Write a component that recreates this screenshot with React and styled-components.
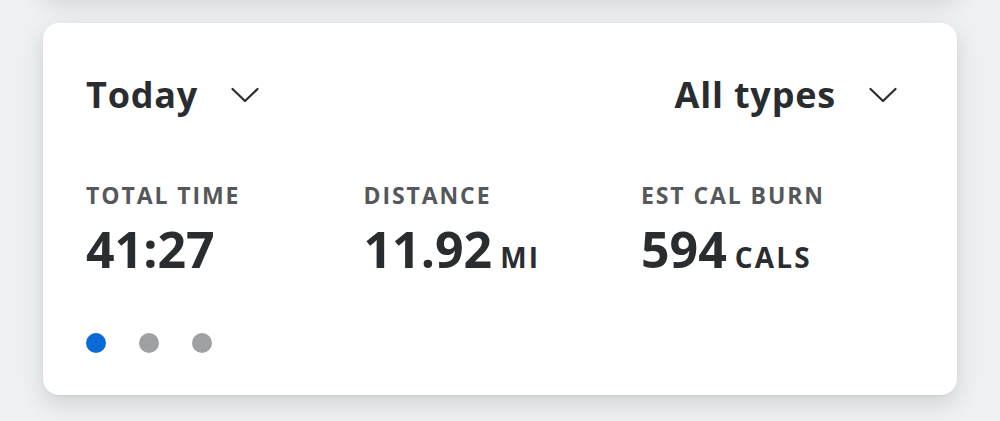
import React from "react";
import styled, { createGlobalStyle } from "styled-components";

const GlobalStyle = createGlobalStyle`
  html, body {
    margin: 0;
    padding: 0;
    background: #eef1f2;
    overflow: hidden;
  }
  body {
    font-family: "Open Sans", Lato, "Liberation Sans", sans-serif;
    color: #2a2d30;
  }
`;

const Feed = styled.div`
  display: flex;
  flex-direction: column;
  gap: 28px;
  margin-top: -105px;
  padding: 0 43px;
  height: 526px;
`;

const Card = styled.section`
  background: #ffffff;
  border-radius: 16px;
  box-shadow: 0 8px 22px rgba(40, 48, 54, 0.16), 0 1px 3px rgba(40, 48, 54, 0.06);
  padding: ${(p) => (p.$ghost ? "0" : "54px 60px 42px 43px")};
  height: ${(p) => (p.$ghost ? "100px" : "auto")};
  flex-shrink: 0;
`;

const Header = styled.div`
  display: flex;
  justify-content: space-between;
  align-items: center;
  height: 36px;
`;

const Picker = styled.button`
  display: flex;
  align-items: center;
  gap: 33px;
  border: 0;
  background: none;
  padding: 0;
  font-family: inherit;
  font-size: 36px;
  line-height: 36px;
  font-weight: 700;
  letter-spacing: 0.8px;
  color: #2a2d30;
  cursor: pointer;
`;

const Stats = styled.div`
  display: grid;
  grid-template-columns: repeat(3, 277.5px);
  margin-top: 70.5px;
`;

const Stat = styled.div`
  display: flex;
  flex-direction: column;
  gap: 17px;
`;

const Label = styled.div`
  font-size: 23px;
  line-height: 23px;
  font-weight: 700;
  letter-spacing: 1.9px;
  color: #55585b;
`;

const Value = styled.div`
  display: flex;
  align-items: baseline;
  gap: 8px;
  font-size: 50px;
  line-height: 50px;
  font-weight: 700;
  color: #2a2d30;
`;

const Unit = styled.span`
  font-size: 28px;
  font-weight: 700;
  letter-spacing: 2.2px;
`;

const Dots = styled.div`
  display: flex;
  gap: 33px;
  margin-top: 51px;
`;

const Dot = styled.span`
  width: 20px;
  height: 20px;
  border-radius: 50%;
  background: ${(p) => (p.$active ? "#0a6bd6" : "#9ea0a2")};
`;

const Chevron = () => (
  <svg width="28" height="16" viewBox="0 0 28 16" fill="none">
    <polyline
      points="1.5,2 14,14 26.5,2"
      stroke="#2a2d30"
      strokeWidth="2.2"
      strokeLinecap="round"
      strokeLinejoin="round"
    />
  </svg>
);

const stats = [
  { label: "TOTAL TIME", value: "41:27" },
  { label: "DISTANCE", value: "11.92", unit: "MI" },
  { label: "EST CAL BURN", value: "594", unit: "CALS" },
];

export default function App() {
  return (
    <>
      <GlobalStyle />
      <Feed>
        <Card $ghost />
        <Card>
          <Header>
            <Picker>
              Today
              <Chevron />
            </Picker>
            <Picker>
              All types
              <Chevron />
            </Picker>
          </Header>
          <Stats>
            {stats.map((s) => (
              <Stat key={s.label}>
                <Label>{s.label}</Label>
                <Value>
                  {s.value}
                  {s.unit && <Unit>{s.unit}</Unit>}
                </Value>
              </Stat>
            ))}
          </Stats>
          <Dots>
            <Dot $active />
            <Dot />
            <Dot />
          </Dots>
        </Card>
      </Feed>
    </>
  );
}
